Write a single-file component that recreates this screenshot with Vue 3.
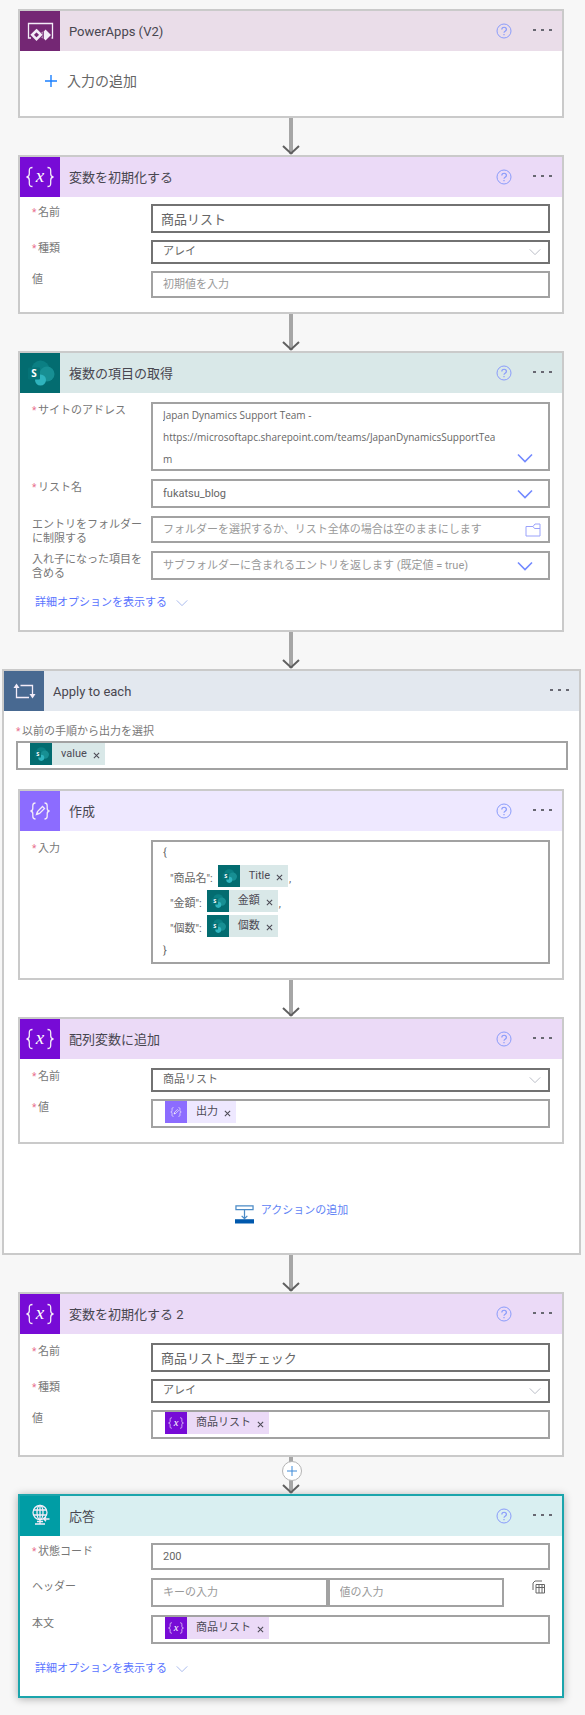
<script setup>
import { h, ref } from 'vue'

const braces = () => [
  h('path', { class: 'ln', d: 'M12.5 10.5c-3 0-3.2 1.2-3.2 3.3v3c0 2-.7 3-2.8 3.2 2.1.2 2.8 1.2 2.8 3.2v3c0 2.1.2 3.3 3.2 3.3' }),
  h('path', { class: 'ln', d: 'M27.5 10.5c3 0 3.2 1.2 3.2 3.3v3c0 2 .7 3 2.8 3.2-2.1.2-2.8 1.2-2.8 3.2v3c0 2.1-.2 3.3-3.2 3.3' }),
]

const glyphs = {
  powerapps: () => [
    h('path', { class: 'ln', d: 'M11 27H8.5V12.5H32.5V27H31.5' }),
    h('path', { class: 'ln bold', d: 'M16.5 19.5 20.8 23.8 16.5 28.1 12.2 23.8z' }),
    h('path', { class: 'fill', d: 'M25.5 18.500 31 24 25.500 29.500 23.800 27.500V20.500z' }),
    h('path', { class: 'fill', d: 'M22.500 20.500V27.500L21.500 26.500 23 24 21.500 21.500z' }),
  ],
  variable: () => [
    ...braces(),
    h('text', { x: 20, y: 25, class: 'var-x' }, 'x'),
  ],
  compose: () => [
    h('path', { class: 'ln', d: 'M15.5 12c-2.5 0-2.7 1-2.7 2.8v2.4c0 1.8-.6 2.6-2.3 2.8 1.7.2 2.3 1 2.3 2.8v2.4c0 1.8.2 2.8 2.7 2.8' }),
    h('path', { class: 'ln', d: 'M24.5 12c2.5 0 2.7 1 2.7 2.8v2.4c0 1.8.6 2.6 2.3 2.8-1.7.2-2.3 1-2.3 2.8v2.4c0 1.8-.2 2.8-2.7 2.8' }),
    h('path', { class: 'ln', d: 'M16.5 23.5l1-3 5-5 2 2-5 5z' }),
    h('path', { class: 'fill', d: 'M16 24l1.2-3.4 2.2 2.2z' }),
  ],
  sharepoint: () => [
    h('circle', { cx: 20.5, cy: 16.5, r: 9, fill: '#0b7f83' }),
    h('circle', { cx: 27, cy: 21, r: 7.5, fill: '#178f93' }),
    h('circle', { cx: 20.5, cy: 27, r: 5.5, fill: '#2fb4be' }),
    h('rect', { x: 8, y: 14.5, width: 12, height: 12, rx: 1, fill: '#057377' }),
    h('text', { x: 14, y: 24, class: 'sp-s' }, 'S'),
  ],
  loop: () => [
    h('path', { class: 'ln', d: 'M12.5 14.5V26.5H25M16.5 14.5H28.5V25' }),
    h('path', { class: 'fill', d: 'M12.5 12.5 15.5 17H9.5z' }),
    h('path', { class: 'fill', d: 'M28.5 27.5 25.5 23H31.5z' }),
  ],
  response: () => [
    h('circle', { class: 'ln', cx: 20, cy: 16.5, r: 7 }),
    h('ellipse', { class: 'ln', cx: 20, cy: 16.5, rx: 3, ry: 7 }),
    h('path', { class: 'ln', d: 'M13.5 14H26.5M13.5 19H26.5M20 9.5V28M15 28H25M17 25.5H23M24 23H29.5M26 20.8 23.8 23 26 25.2' }),
  ],
}

const AppIcon = (props) => h('svg', { class: 'app-icon', viewBox: '0 0 40 40', 'aria-hidden': 'true' }, glyphs[props.name]())
AppIcon.props = ['name']

const CardHead = (props) => h('header', { class: ['head', props.tone] }, [
  h('span', { class: 'head-icon' }, [h(AppIcon, { name: props.icon })]),
  h('h2', { class: 'head-title' }, props.title),
  props.nohelp ? null : h('button', { class: 'help', type: 'button', 'aria-label': 'ヘルプ' }, [
    h('svg', { viewBox: '0 0 16 16' }, [
      h('circle', { cx: 8, cy: 8, r: 7 }),
      h('path', { d: 'M5.8 6.5c0-3 4.6-3 4.6 0 0 1.7-2.4 1.8-2.4 3.2M8 11v1.3' }),
    ]),
  ]),
  h('button', { class: 'more', type: 'button', 'aria-label': 'メニュー' }, [h('i'), h('i'), h('i')]),
])
CardHead.props = ['tone', 'icon', 'title', 'nohelp']

const Token = (props) => h('span', { class: ['token', props.tone] }, [
  h('span', { class: 'token-icon' }, [h(AppIcon, { name: props.icon })]),
  h('span', { class: 'token-text' }, props.text),
  h('button', { class: 'token-x', type: 'button', 'aria-label': props.text + 'を削除' }, [
    h('svg', { viewBox: '0 0 8 8' }, [h('path', { d: 'M1 1l6 6M7 1L1 7' })]),
  ]),
])
Token.props = ['tone', 'icon', 'text']

const Chevron = () => h('svg', { class: 'chev', viewBox: '0 0 16 10', 'aria-hidden': 'true' }, [h('path', { d: 'M1 1.5l7 7 7-7' })])

const Connector = (props, { slots }) => h('div', { class: 'connector' }, [
  h('span', { class: 'stem' }),
  h('svg', { viewBox: '0 0 18 10', 'aria-hidden': 'true' }, [h('path', { d: 'M1 1l8 7.5 8-7.5' })]),
  slots.default ? slots.default() : null,
])

const listName = ref('商品リスト')
const checkName = ref('商品リスト_型チェック')
const site = ref('Japan Dynamics Support Team -\nhttps://microsoftapc.sharepoint.com/teams/JapanDynamicsSupportTeam')
const status = ref('200')
const items = [
  { key: '商品名', token: 'Title', end: ',' },
  { key: '金額', token: '金額', end: ',' },
  { key: '個数', token: '個数', end: '' },
]
</script>

<template>
  <main class="flow">
    <section class="card">
      <CardHead tone="plum" icon="powerapps" title="PowerApps (V2)" />
      <div class="trigger">
        <button class="add-input" type="button">
          <svg viewBox="0 0 12 12" aria-hidden="true"><path d="M6 0v12M0 6h12" /></svg>入力の追加
        </button>
      </div>
    </section>

    <Connector />

    <section class="card">
      <CardHead tone="violet" icon="variable" title="変数を初期化する" />
      <div class="body tight">
        <div class="row">
          <label class="req" for="v1-name">名前</label>
          <input id="v1-name" v-model="listName" class="box dark big">
        </div>
        <div class="row">
          <label class="req" for="v1-type">種類</label>
          <div class="box dark low pick">
            <select id="v1-type"><option>アレイ</option></select>
            <Chevron />
          </div>
        </div>
        <div class="row">
          <label for="v1-value">値</label>
          <input id="v1-value" class="box mid" placeholder="初期値を入力">
        </div>
      </div>
    </section>

    <Connector />

    <section class="card">
      <CardHead tone="teal" icon="sharepoint" title="複数の項目の取得" />
      <div class="body wide-gap">
        <div class="row">
          <label class="req" for="sp-site">サイトのアドレス</label>
          <div class="box address pick blue">
            <textarea id="sp-site" v-model="site" rows="3" spellcheck="false"></textarea>
            <Chevron />
          </div>
        </div>
        <div class="row">
          <label class="req" for="sp-list">リスト名</label>
          <div class="box pick blue">
            <select id="sp-list"><option>fukatsu_blog</option></select>
            <Chevron />
          </div>
        </div>
        <div class="row">
          <label for="sp-folder">エントリをフォルダーに制限する</label>
          <div class="box mid pick">
            <input id="sp-folder" placeholder="フォルダーを選択するか、リスト全体の場合は空のままにします">
            <button class="folder" type="button" aria-label="フォルダーの選択">
              <svg viewBox="0 0 16 14"><path d="M1 3.5h7l2-2.5h5v12H1zM8 3.5l1.5 2H15" /></svg>
            </button>
          </div>
        </div>
        <div class="row">
          <label for="sp-nest">入れ子になった項目を含める</label>
          <div class="box pick blue">
            <select id="sp-nest" class="hint"><option>サブフォルダーに含まれるエントリを返します (既定値 = true)</option></select>
            <Chevron />
          </div>
        </div>
      </div>
      <a class="advanced" href="#">詳細オプションを表示する<Chevron /></a>
    </section>

    <Connector />

    <section class="card scope">
      <CardHead tone="slate" icon="loop" title="Apply to each" :nohelp="true" />
      <div class="source">
        <span id="each-source" class="label req">以前の手順から出力を選択</span>
        <div class="box tokens" role="group" aria-labelledby="each-source">
          <Token tone="teal" icon="sharepoint" text="value" />
        </div>
      </div>

      <section class="card">
        <CardHead tone="lilac" icon="compose" title="作成" />
        <div class="body">
          <div class="row">
            <span id="compose-in" class="label req">入力</span>
            <div class="box code" role="group" aria-labelledby="compose-in">
              <p>{</p>
              <p v-for="item in items" :key="item.key" class="pair">
                <span class="key">"{{ item.key }}":</span>
                <Token tone="teal" icon="sharepoint" :text="item.token" />
                <span>{{ item.end }}</span>
              </p>
              <p>}</p>
            </div>
          </div>
        </div>
      </section>

      <Connector />

      <section class="card">
        <CardHead tone="violet" icon="variable" title="配列変数に追加" />
        <div class="body">
          <div class="row">
            <label class="req" for="ap-name">名前</label>
            <div class="box dark low pick">
              <select id="ap-name"><option>商品リスト</option></select>
              <Chevron />
            </div>
          </div>
          <div class="row">
            <span id="ap-value" class="label req">値</span>
            <div class="box tokens" role="group" aria-labelledby="ap-value">
              <Token tone="lilac" icon="compose" text="出力" />
            </div>
          </div>
        </div>
      </section>

      <button class="add-action" type="button">
        <svg viewBox="0 0 20 20" aria-hidden="true">
          <path class="thin" d="M1 1.5h18v4H1zM10 5.5v9M7 12l3 3 3-3" />
          <path class="solid" d="M0 15.5h20V20H0z" />
        </svg>
        アクションの追加
      </button>
    </section>

    <Connector />

    <section class="card">
      <CardHead tone="violet" icon="variable" title="変数を初期化する 2" />
      <div class="body roomy">
        <div class="row">
          <label class="req" for="v2-name">名前</label>
          <input id="v2-name" v-model="checkName" class="box dark big">
        </div>
        <div class="row">
          <label class="req" for="v2-type">種類</label>
          <div class="box dark low pick">
            <select id="v2-type"><option>アレイ</option></select>
            <Chevron />
          </div>
        </div>
        <div class="row">
          <span id="v2-value" class="label">値</span>
          <div class="box tokens" role="group" aria-labelledby="v2-value">
            <Token tone="violet" icon="variable" text="商品リスト" />
          </div>
        </div>
      </div>
    </section>

    <Connector>
      <button class="insert" type="button" aria-label="新しいステップの挿入">
        <svg viewBox="0 0 10 10"><path d="M5 0v10M0 5h10" /></svg>
      </button>
    </Connector>

    <section class="card active">
      <CardHead tone="cyan" icon="response" title="応答" />
      <div class="body tight wide-gap roomy">
        <div class="row">
          <label class="req" for="rs-code">状態コード</label>
          <input id="rs-code" v-model="status" class="box mid">
        </div>
        <div class="row">
          <label for="rs-key">ヘッダー</label>
          <div class="pairs">
            <input id="rs-key" class="box" placeholder="キーの入力">
            <input class="box" placeholder="値の入力" aria-label="ヘッダーの値">
            <button class="mode" type="button" aria-label="テキスト モードに切り替える">
              <svg viewBox="0 0 14 14"><path d="M1 10V3l2-2h7M4 4.5h8.5v8.5H4zM4 7.5h8.5M7 4.5V13M10 4.5V13" /></svg>
            </button>
          </div>
        </div>
        <div class="row">
          <span id="rs-body" class="label">本文</span>
          <div class="box tokens" role="group" aria-labelledby="rs-body">
            <Token tone="violet" icon="variable" text="商品リスト" />
          </div>
        </div>
      </div>
      <a class="advanced" href="#">詳細オプションを表示する<Chevron /></a>
    </section>
  </main>
</template>

<style>
body {
  background: #f7f7f7;
}

.flow,
.flow * {
  box-sizing: border-box;
}

.flow button,
.flow input,
.flow select,
.flow textarea {
  margin: 0;
  padding: 0;
  border: 0;
  border-radius: 0;
  background: none;
  color: inherit;
  font: inherit;
  outline: 0;
}

.flow button {
  cursor: pointer;
}

.flow svg {
  display: block;
  flex: none;
  fill: none;
  stroke: currentColor;
}

.plum { --tone: #742774; --tint: #eadde9; }
.violet { --tone: #770bd6; --tint: #ebdaf7; }
.teal { --tone: #036c70; --tint: #d9e8e8; }
.slate { --tone: #486991; --tint: #e3e8ef; }
.lilac { --tone: #8c6cff; --tint: #eee8ff; }
.cyan { --tone: #009da5; --tint: #d9eff1; }

.head {
  display: flex;
  align-items: center;
  height: 40px;
  padding-right: 10px;
  background: var(--tint);
}

.head-icon {
  width: 40px;
  height: 40px;
  background: var(--tone);
}

.head-title {
  flex: 1;
  margin: 0;
  padding: 1px 0 0 9px;
  color: #484650;
  font-size: 13px;
  font-weight: 400;
  line-height: 20px;
}

.flow .app-icon {
  width: 100%;
  height: 100%;
  color: #f3ecf8;
  stroke: none;
}

.app-icon .ln {
  stroke: currentColor;
  stroke-width: 1.3;
}

.app-icon .bold {
  stroke-width: 2.6;
}

.app-icon .fill {
  fill: currentColor;
}

.app-icon text {
  fill: #fff;
  text-anchor: middle;
}

.app-icon .var-x {
  font: italic 19px "Liberation Serif", serif;
}

.app-icon .sp-s {
  font: bold 10px "Open Sans", sans-serif;
}

.flow .help {
  width: 16px;
  height: 16px;
  color: #8a9cfb;
}

.help path {
  stroke-width: 1.2;
}

.flow .more {
  display: flex;
  gap: 5px;
  margin-left: 21px;
  padding: 7px 0 9px;
}

.more i {
  width: 3px;
  height: 2px;
  background: #686872;
}

.chev {
  width: 12px;
  height: 8px;
}

.token {
  display: inline-flex;
  align-items: center;
  height: 22px;
  background: var(--tint);
  color: #4c4a55;
}

.token-icon {
  width: 22px;
  height: 22px;
  background: var(--tone);
}

.token-text {
  padding: 0 6px 0 9px;
  line-height: 20px;
}

.flow .token-x {
  padding: 2px 5px 0 0;
}

.token-x svg {
  width: 7px;
  height: 7px;
  stroke-width: 1.2;
}

.connector {
  position: relative;
  display: flex;
  flex-direction: column;
  align-items: center;
  height: 37px;
  padding-right: 1px;
  color: #606060;
}

.connector .stem {
  width: 4px;
  height: 36px;
  background: #a6a6a6;
}

.connector > svg {
  width: 18px;
  height: 10px;
  margin-top: -9px;
  stroke-width: 2;
}
</style>

<style scoped>
.flow {
  padding: 9px 4px 16px 2px;
  color: #666;
  font-family: Roboto, "Noto Sans CJK JP", sans-serif;
  font-size: 11px;
  line-height: 14px;
}

.card {
  margin: 0 17px 0 16px;
  border: 2px solid #cacaca;
  background: #fff;
}

.card.scope {
  margin: 0;
}

.scope .card {
  margin: 0 15px 0 14px;
}

.card.active {
  border-color: #1ba5ac;
  box-shadow: 0 1px 8px rgba(0, 0, 0, 0.3);
}

.trigger {
  display: flex;
  align-items: center;
  height: 65px;
  padding: 0 0 5px 25px;
}

.flow .add-input {
  display: flex;
  align-items: center;
  gap: 10px;
  font-size: 14px;
}

.add-input svg {
  width: 12px;
  height: 12px;
  color: #1a80ff;
  stroke-width: 1.4;
}

.body {
  display: grid;
  gap: 7px;
  padding: 9px 12px 14px;
}

.body.tight {
  padding-top: 7px;
}

.body.wide-gap {
  gap: 8px;
}

.body.roomy {
  padding-bottom: 16px;
}

.row {
  display: grid;
  grid-template-columns: 119px minmax(0, 1fr);
  align-items: start;
}

label,
.label {
  margin: 2px 0 -4px;
  color: #777;
  line-height: 14px;
}

.req::before {
  content: "*";
  display: inline-block;
  width: 6px;
  color: #e8718d;
  font-size: 10px;
}

.flow .box {
  width: 100%;
  min-width: 0;
  height: 29px;
  border: 2px solid #a2a2a2;
  background: #fff;
}

.flow input.box {
  padding: 0 10px;
}

.flow .dark {
  border-color: #727272;
}

.flow .mid {
  height: 27px;
}

.flow .low {
  height: 24px;
}

.flow input.big {
  padding: 0 8px;
  font-size: 13px;
}

::placeholder,
.flow .hint {
  color: #999;
  opacity: 1;
}

.flow .pick {
  display: flex;
  align-items: center;
  padding: 0 7px 0 10px;
  color: #a4a8b4;
}

.pick select,
.pick input,
.pick textarea {
  flex: 1;
  min-width: 0;
  height: 100%;
  appearance: none;
  color: #666;
}

.flow .pick.blue {
  padding-right: 15px;
  color: #7289ff;
}

.pick.blue .chev {
  width: 16px;
  height: 10px;
  stroke-width: 1.6;
}

.flow .address {
  height: 69px;
  align-items: flex-end;
}

.flow .address textarea {
  padding-right: 15px;
  overflow: hidden;
  resize: none;
  font-family: "Open Sans", sans-serif;
  font-size: 10px;
  line-height: 22px;
  word-break: break-all;
}

.address .chev {
  margin-bottom: 6px;
}

.flow .folder {
  color: #9aa2fb;
}

.folder svg {
  width: 16px;
  height: 14px;
}

.advanced {
  display: flex;
  align-items: center;
  gap: 9px;
  padding: 1px 0 19px 15px;
  color: #5a74ff;
  line-height: 16px;
  text-decoration: none;
}

.advanced .chev {
  color: #8da4e8;
}

.source {
  display: flex;
  flex-direction: column;
  padding: 12px 11px 19px 12px;
}

.source .label {
  margin-bottom: 2px;
}

.tokens {
  display: flex;
  align-items: flex-start;
  padding-left: 12px;
}

.flow .code {
  display: flex;
  flex-direction: column;
  gap: 3px;
  height: auto;
  min-height: 124px;
  padding: 0 10px;
}

.code p {
  height: 20px;
  margin: 0;
  line-height: 22px;
}

.code .pair {
  display: flex;
  height: 22px;
  gap: 1px;
  padding-left: 7px;
  line-height: 28px;
}

.key {
  padding-right: 4px;
}

.flow .add-action {
  display: flex;
  align-items: flex-start;
  gap: 7px;
  margin: 60px auto 29px;
  color: #5f83f5;
}

.add-action svg {
  width: 19px;
  height: 20px;
}

.add-action .thin {
  stroke: #4a8ac6;
  stroke-width: 1.3;
}

.add-action .solid {
  fill: #0058ad;
  stroke: none;
}

.flow .insert {
  position: absolute;
  top: 4px;
  left: 50%;
  display: grid;
  place-items: center;
  width: 20px;
  height: 20px;
  margin-left: -10px;
  border: 1px solid #b4b4b4;
  border-radius: 50%;
  background: #fff;
  color: #3c8ad8;
}

.insert svg {
  width: 10px;
  height: 10px;
}

.pairs {
  display: grid;
  grid-template-columns: 1fr 1fr 46px;
}

.flow .mode {
  justify-self: end;
  align-self: start;
  margin: 2px 4px 0 0;
}

.mode svg {
  width: 14px;
  height: 14px;
}
</style>
